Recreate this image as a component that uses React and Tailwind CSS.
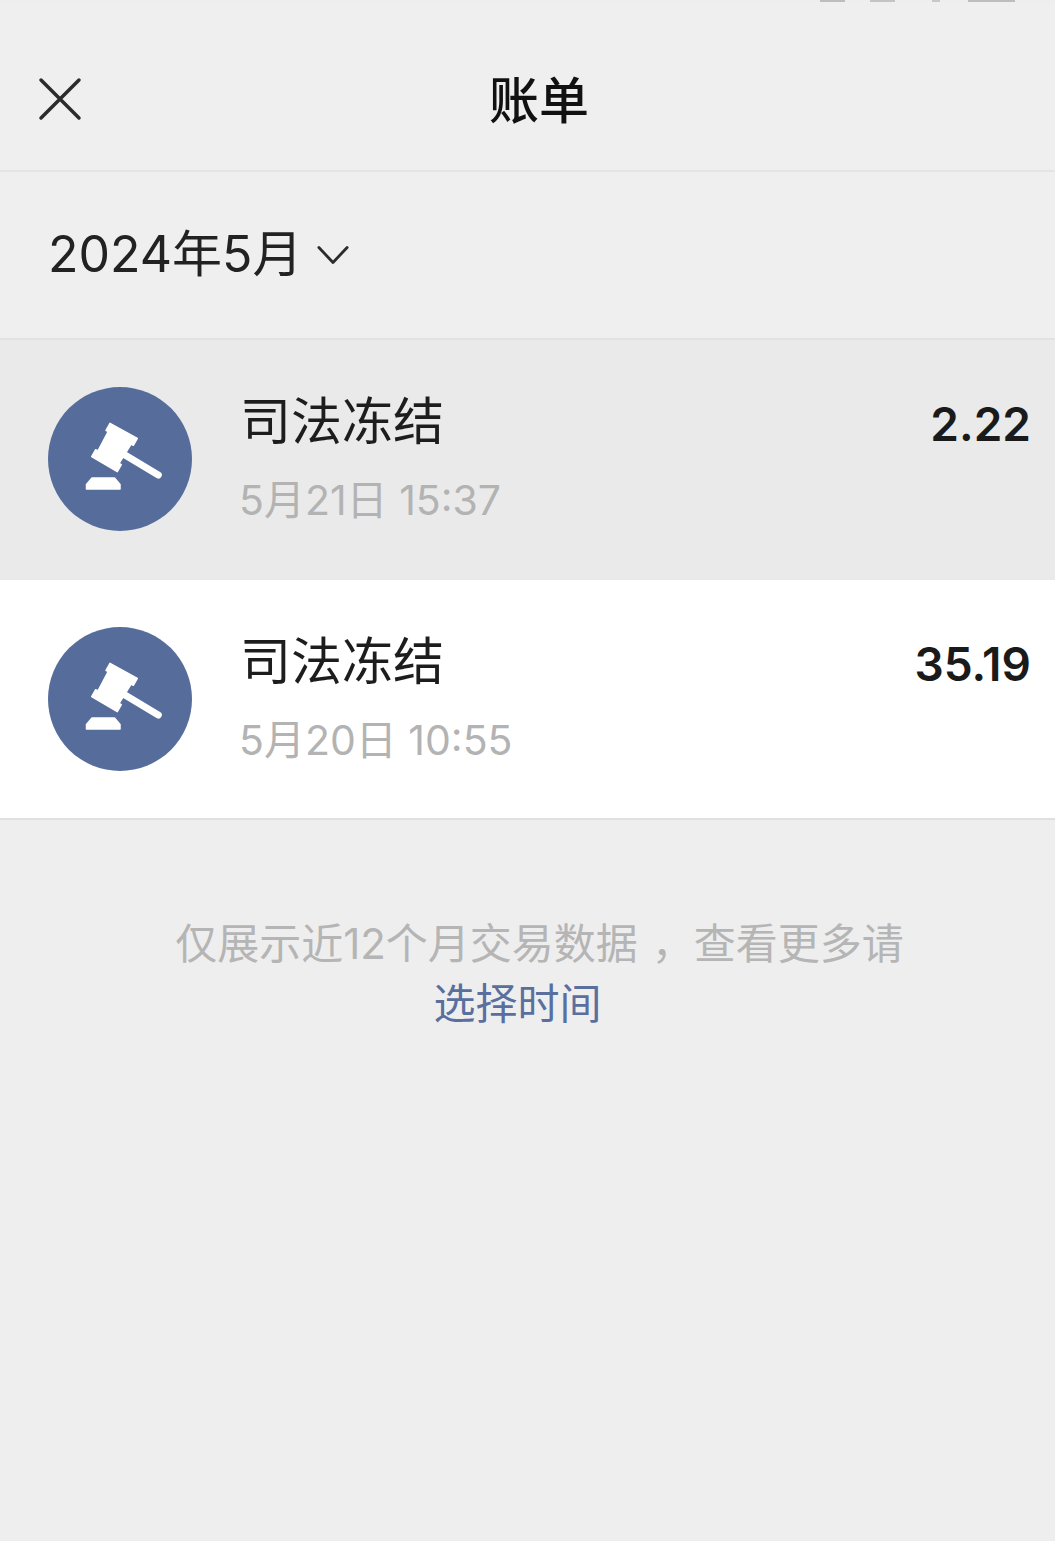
const bills = [
  { id: 1, title: "司法冻结", time: "5月21日 15:37", amount: "2.22", rowClass: "bg-[#eaeaea] h-[240px]" },
  { id: 2, title: "司法冻结", time: "5月20日 10:55", amount: "35.19", rowClass: "bg-white h-[238px]" },
];

function GavelIcon() {
  return (
    <svg viewBox="0 0 144 144" className="w-[144px] h-[144px] shrink-0">
      <circle cx="72" cy="72" r="72" fill="#566d9b" />
      {/* head */}
      <path
        d="M62 36.3 L89.3 51.3 L85.3 58.3 L83.1 57 L71.1 76.4 L73.3 77.7 L69.3 84.7 L43.7 69.7 L47.7 62.7 L49.9 64 L60.2 44.6 L58 43.3 Z"
        fill="#fff"
        stroke="#fff"
        strokeWidth="1.5"
        strokeLinejoin="round"
      />
      {/* handle */}
      <path d="M77 68 L110.3 88" stroke="#fff" strokeWidth="7" strokeLinecap="round" fill="none" />
      {/* base */}
      <path
        d="M44 91 L66.5 91 L72 97.5 L72 102 L38.5 102 L38.5 97.5 Z"
        fill="#fff"
        stroke="#fff"
        strokeWidth="1.5"
        strokeLinejoin="round"
      />
    </svg>
  );
}

function BillRow({ title, time, amount, rowClass }) {
  return (
    <div className={`flex items-start pl-[48px] pr-[24px] pt-[47px] ${rowClass}`}>
      <GavelIcon />
      <div className="ml-[49px] flex-1 min-w-0 mt-[-1px]">
        <p className="text-[51px] leading-[72px] ml-[-1px] text-[#1d1d1d]">{title}</p>
        <p className="text-[41px] leading-[60px] ml-[-2px] mt-[12px] text-[#b3b3b3]">{time}</p>
      </div>
      <span className="text-[46px] leading-[72px] font-semibold text-[#1a1a1a] mt-[1px]">{amount}</span>
    </div>
  );
}

export default function App() {
  return (
    <div
      className="min-h-[1541px] bg-[#eeeeef] overflow-hidden"
      style={{ fontFamily: 'Inter, "Noto Sans CJK SC", sans-serif' }}
    >
      {/* cut off status bar */}
      <div className="flex h-[2px] items-start justify-end pr-[40px]">
        <div className="w-[25px] h-[2px] bg-[#bdbdbd]" />
        <div className="ml-[25px] w-[25px] h-[2px] bg-[#c4c4c4]" />
        <div className="ml-[37px] w-[8px] h-[2px] bg-[#c8c8c8]" />
        <div className="ml-[28px] w-[47px] h-[2px] bg-[#bdbdbd]" />
      </div>

      {/* nav */}
      <header className="relative flex h-[170px] items-center justify-center border-b-2 border-[#e4e4e4] bg-[#efefef] pl-[23px] pt-[30px]">
        <svg viewBox="0 0 44 44" className="absolute left-[38px] top-[75px] w-[44px] h-[44px]" fill="none" stroke="#2b2b2b" strokeWidth="3.5" strokeLinecap="round">
          <path d="M3 3 L41 41 M41 3 L3 41" />
        </svg>
        <h1 className="text-[50px] leading-[72px] font-medium text-[#111]">账单</h1>
      </header>

      {/* month */}
      <div className="flex h-[168px] items-center border-b-2 border-[#e2e2e2] bg-[#efefef] pl-[48px]">
        <span className="text-[50px] leading-[72px] text-[#222] mt-[-2px]">2024年5月</span>
        <svg viewBox="0 0 34 22" className="ml-[15px] w-[32px] h-[22px]" fill="none" stroke="#2b2b2b" strokeWidth="3" strokeLinecap="round" strokeLinejoin="round">
          <path d="M2 3 L17 19 L32 3" />
        </svg>
      </div>

      {/* list */}
      <div className="border-b-2 border-[#e0e0e0]">
        {bills.map((b) => (
          <BillRow key={b.id} {...b} />
        ))}
      </div>

      {/* footer */}
      <div className="pt-[94px] pl-[24px] text-center text-[42px] leading-[60px]">
        <p className="text-[#b5b5b5]">
          仅展示近12个月交易数据<span className="ml-[14px]">，</span>查看更多请
        </p>
        <p className="pr-[44px] text-[#5a6f9e]">选择时间</p>
      </div>
    </div>
  );
}
